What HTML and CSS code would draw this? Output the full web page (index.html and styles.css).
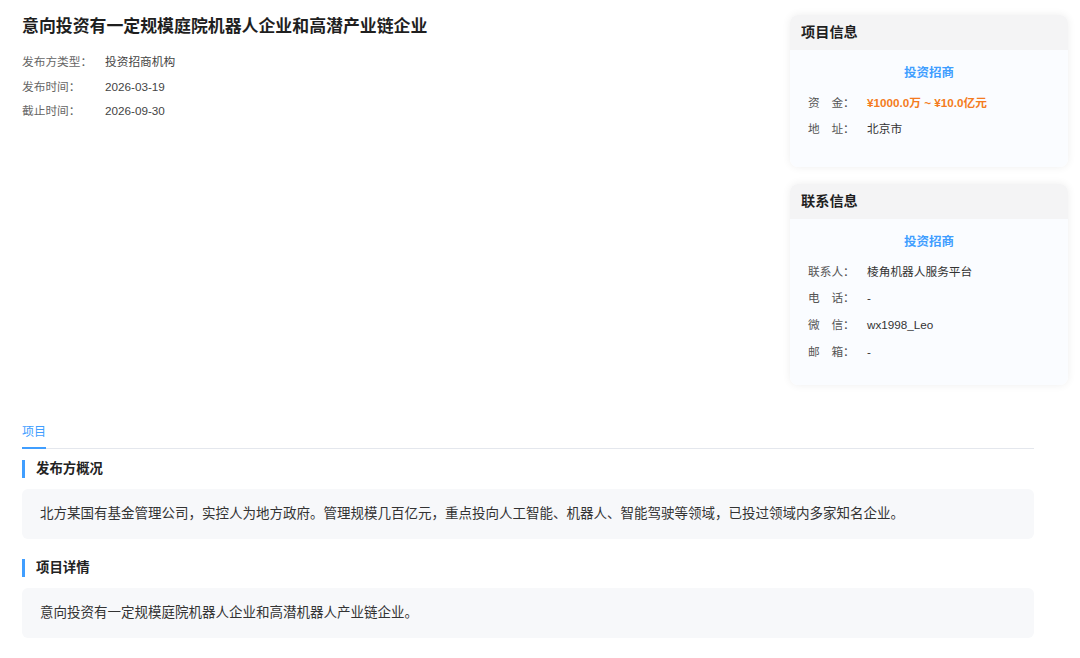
FILE: index.html
```
<!DOCTYPE html>
<html lang="zh-CN">
<head>
    <meta charset="UTF-8">
    <meta name="viewport" content="width=device-width, initial-scale=1.0">
    <title>项目详情</title>
    <link rel="stylesheet" href="styles.css">
</head>
<body>
    <div id="page">
        <div class="top">
            <div class="info">
                <h1 class="title">意向投资有一定规模庭院机器人企业和高潜产业链企业</h1>
                <div class="meta">
                    <div class="meta-row"><span class="meta-label">发布方类型：</span><span class="meta-value">投资招商机构</span></div>
                    <div class="meta-row"><span class="meta-label">发布时间：</span><span class="meta-value">2026-03-19</span></div>
                    <div class="meta-row"><span class="meta-label">截止时间：</span><span class="meta-value">2026-09-30</span></div>
                </div>
            </div>

            <div class="side">
                <!--项目信息-->
                <div class="card">
                    <div class="card-head">项目信息</div>
                    <div class="card-body">
                        <div class="brand">投资招商</div>
                        <div class="row"><span class="row-label">资　金：</span><span class="row-value money">¥1000.0万 ~ ¥10.0亿元</span></div>
                        <div class="row"><span class="row-label">地　址：</span><span class="row-value">北京市</span></div>
                    </div>
                </div>

                <!--联系信息-->
                <div class="card card-contact">
                    <div class="card-head">联系信息</div>
                    <div class="card-body">
                        <div class="brand">投资招商</div>
                        <div class="row"><span class="row-label">联系人：</span><span class="row-value">棱角机器人服务平台</span></div>
                        <div class="row"><span class="row-label">电　话：</span><span class="row-value">-</span></div>
                        <div class="row"><span class="row-label">微　信：</span><span class="row-value">wx1998_Leo</span></div>
                        <div class="row"><span class="row-label">邮　箱：</span><span class="row-value">-</span></div>
                    </div>
                </div>
            </div>
        </div>

        <div class="detail">
            <div class="tabs">
                <span class="tab active">项目</span>
            </div>

            <h3 class="section-title">发布方概况</h3>
            <div class="section-box">北方某国有基金管理公司，实控人为地方政府。管理规模几百亿元，重点投向人工智能、机器人、智能驾驶等领域，已投过领域内多家知名企业。</div>

            <h3 class="section-title">项目详情</h3>
            <div class="section-box">意向投资有一定规模庭院机器人企业和高潜机器人产业链企业。</div>
        </div>
    </div>
</body>
</html>
```

FILE: styles.css
```
*{
    margin: 0;
    padding: 0;
    box-sizing: border-box;
}

body{
    background-color: #ffffff;
    font-family: "Liberation Sans", "Noto Sans CJK SC", sans-serif;
    color: #333333;
}

#page{
    padding: 15px 12px 0 22px;
}

.top{
    display: flex;
    align-items: flex-start;
}

.info{
    flex: 1;
}

.title{
    font-size: 16.9px;
    line-height: 22px;
    margin-top: 1px;
    font-weight: bold;
    color: #1f1f1f;
}

.meta{
    margin-top: 12px;
}

.meta-row{
    display: flex;
    font-size: 11.7px;
    line-height: 24.5px;
}

.meta-label{
    width: 83px;
    color: #666666;
}

.meta-value{
    color: #444444;
}

.side{
    width: 278px;
}

.card{
    border-radius: 8px;
    overflow: hidden;
    box-shadow: 0 0 8px rgba(0, 0, 0, 0.07);
}

.card-head{
    height: 35px;
    line-height: 35px;
    padding-left: 11px;
    background-color: #f4f4f5;
    font-size: 14.2px;
    font-weight: bold;
    color: #1f1f1f;
}

.card-body{
    background-color: #fafcff;
    padding: 13px 18px 24px 18px;
}

.card-contact{
    margin-top: 17px;
}

.card-contact .card-body{
    padding-bottom: 20px;
}

.brand{
    text-align: center;
    font-size: 12.5px;
    line-height: 20px;
    font-weight: bold;
    color: #409eff;
    margin-bottom: 6.6px;
}

.row{
    display: flex;
    font-size: 11.7px;
    line-height: 26.7px;
}

.row-label{
    width: 59px;
    color: #555555;
}

.row-value{
    color: #333333;
}

.money{
    color: #f47b20;
    font-weight: bold;
}

.detail{
    margin-top: 37px;
    margin-right: 34px;
}

.tabs{
    display: flex;
    border-bottom: 1px solid #e4e7ed;
}

.tab{
    font-size: 12px;
    line-height: 20px;
    padding-bottom: 5px;
    margin-bottom: -1px;
    border-bottom: 2px solid #409eff;
    color: #409eff;
}

.section-title{
    margin-top: 11px;
    border-left: 3px solid #409eff;
    padding-left: 11px;
    font-size: 13.4px;
    line-height: 18px;
    font-weight: bold;
    color: #222222;
}

.section-box{
    margin-top: 11px;
    margin-bottom: 20px;
    padding: 15px 18px;
    background-color: #f7f8fa;
    border-radius: 6px;
    font-size: 13.5px;
    line-height: 20px;
    color: #333333;
}

.section-box + .section-title{
    margin-top: 0;
}
```
